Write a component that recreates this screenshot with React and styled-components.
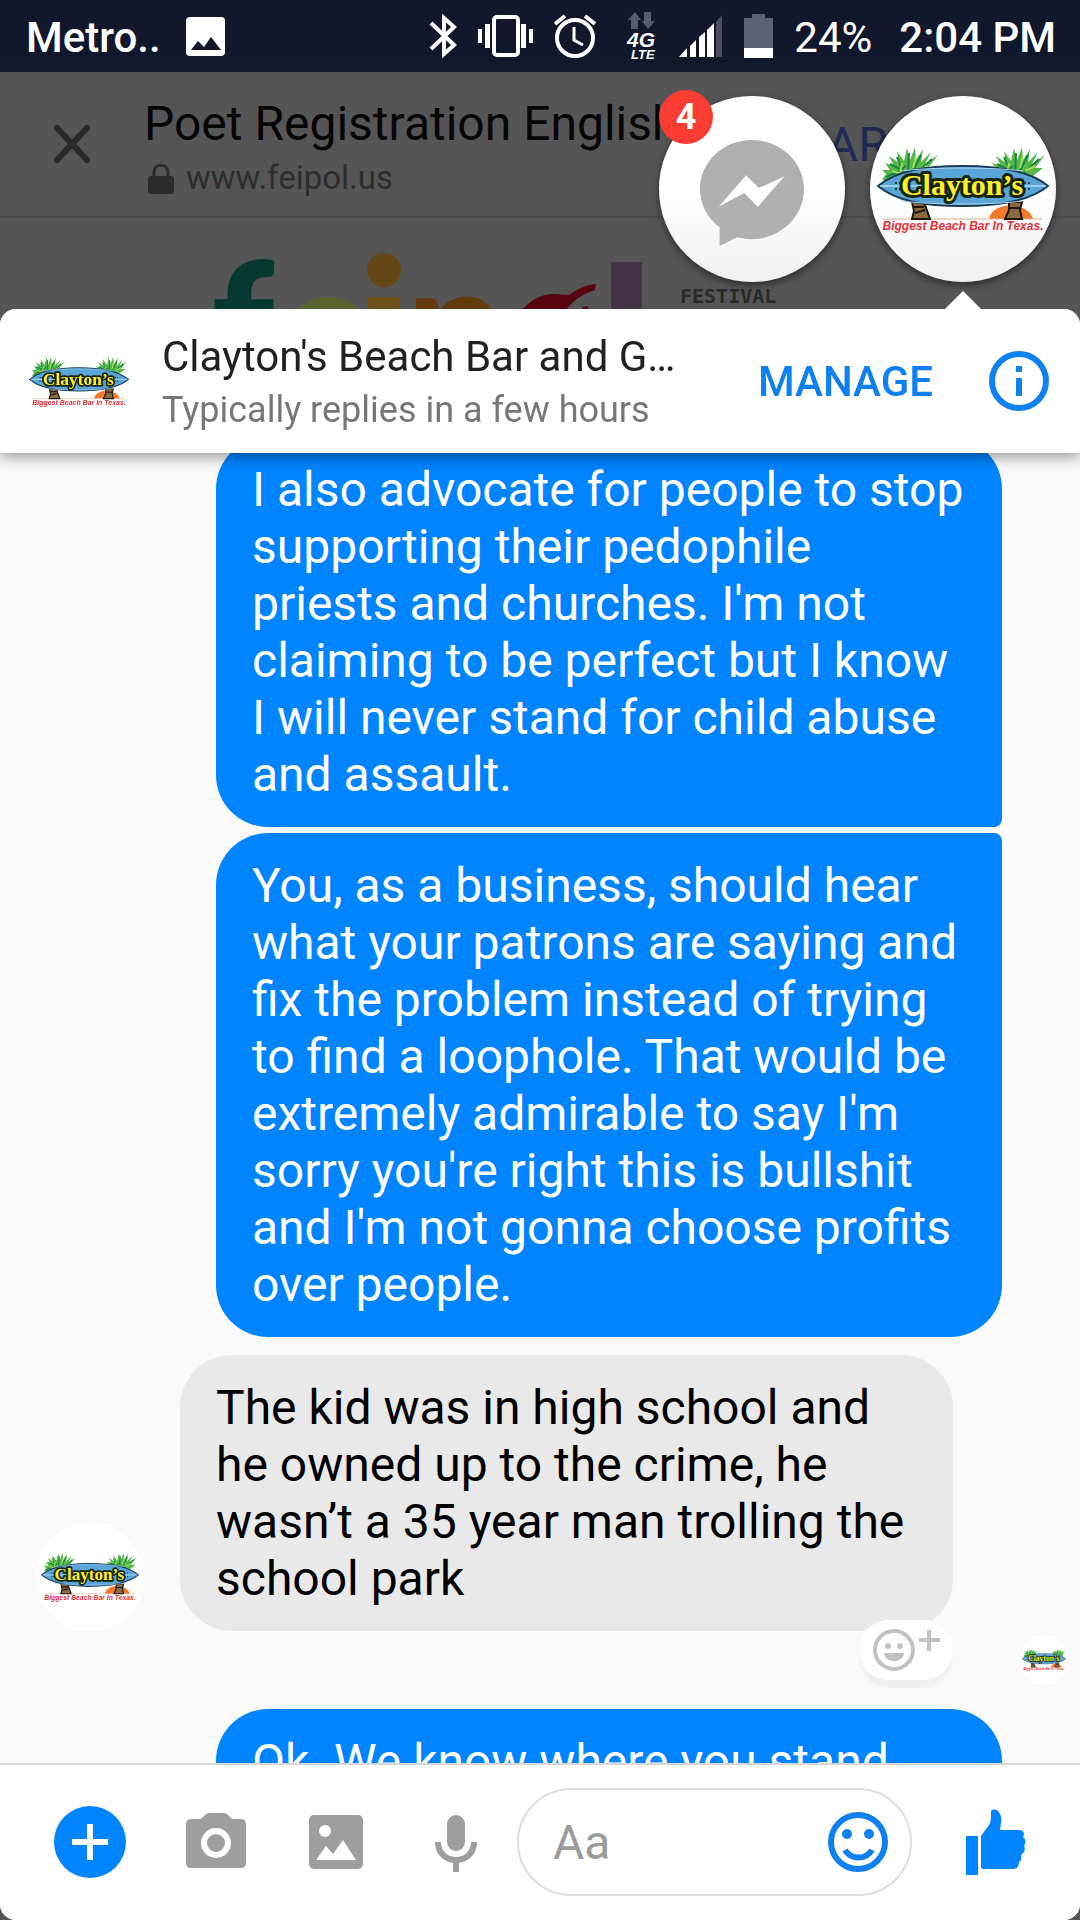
import React, { useLayoutEffect, useRef } from "react";
import styled, { createGlobalStyle, ThemeProvider } from "styled-components";

const theme = {
  colors: {
    blue: "#0084ff",
    link: "#0f80f0",
    statusBar: "#12172b",
    dimmed: "#555555",
    thread: "#fafafa",
    incoming: "#e9e9e9",
    icon: "#9e9e9e"
  },
  font: "Roboto, 'Liberation Sans', sans-serif"
};

const GlobalStyle = createGlobalStyle`
  * {
    box-sizing: border-box;
  }
  body {
    margin: 0;
    font-family: ${theme.font};
    background: ${theme.colors.dimmed};
  }
  button, input {
    font-family: inherit;
  }
  svg {
    display: block;
    flex: none;
  }
`;

const Screen = styled.div`
  position: relative;
  display: flex;
  flex-direction: column;
  height: 100vh;
  overflow: hidden;
  background: ${props => props.theme.colors.dimmed};
`;

const StatusBar = styled.header`
  display: flex;
  flex: none;
  align-items: center;
  height: 72px;
  padding: 0 24px 0 26px;
  color: #ffffff;
  font-size: 42px;
  line-height: 50px;
  background: linear-gradient(${props => props.theme.colors.statusBar} 50%, #10192b);
`;

const Carrier = styled.span`
  margin-right: 25px;
  padding-top: 4px;
  font-weight: 500;
`;

const StatusIcons = styled.div`
  display: flex;
  align-items: center;
  gap: 21px;
  margin-left: auto;
`;

const BatteryLevel = styled.span`
  padding-top: 4px;
`;

const Clock = styled.time`
  margin-left: 6px;
  padding-top: 4px;
  font-weight: 500;
`;

const Browser = styled.section`
  flex: none;
  height: 237px;
  overflow: hidden;
`;

const BrowserBar = styled.div`
  display: flex;
  align-items: center;
  padding: 18px 165px 18px 54px;
  border-bottom: 2px solid #4a4a4a;
`;

const PlainButton = styled.button`
  display: flex;
  flex: none;
  align-items: center;
  justify-content: center;
  padding: 0;
  border: 0;
  background: none;
  color: inherit;
`;

const PageInfo = styled.div`
  display: flex;
  flex-direction: column;
  gap: 6px;
  margin-left: 54px;
  padding-top: 6px;
`;

const PageTitle = styled.h1`
  margin: 0;
  color: #060606;
  font-size: 48px;
  font-weight: 400;
  line-height: 56px;
  white-space: nowrap;
`;

const PageUrl = styled.div`
  display: flex;
  align-items: center;
  gap: 12px;
  padding-left: 4px;
  color: #2d2d2d;
  font-size: 33px;
  line-height: 40px;
`;

const ShareButton = styled(PlainButton)`
  margin-left: auto;
  color: #1f2b55;
  font-size: 48px;
`;

const PageLogo = styled.div`
  display: flex;
  padding: 23px 0 0 200px;
`;

const ChatHeads = styled.nav`
  position: absolute;
  top: 96px;
  right: 24px;
  z-index: 2;
  display: flex;
  gap: 25px;
`;

const ChatHead = styled(PlainButton)`
  position: relative;
  width: 186px;
  height: 186px;
  padding-top: ${props => props.$padTop || 0}px;
  border-radius: 50%;
  background: linear-gradient(#ffffff 50%, #f0f0f0);
  box-shadow: 0 3px 8px rgba(0, 0, 0, 0.5);
`;

const Badge = styled.span`
  position: absolute;
  top: -6px;
  left: 0;
  width: 54px;
  height: 54px;
  border-radius: 50%;
  color: #ffffff;
  background: #fa3c33;
  font-size: 36px;
  font-weight: 700;
  line-height: 54px;
  text-align: center;
`;

const Pointer = styled.span`
  position: absolute;
  top: 195px;
  right: 74px;
  border: 19px solid transparent;
  border-top-width: 0;
  border-bottom-color: #ffffff;
`;

const Panel = styled.main`
  display: flex;
  flex: 1;
  flex-direction: column;
  min-height: 0;
  overflow: hidden;
  border-radius: 16px;
  background: #ffffff;
`;

const PanelHeader = styled.div`
  position: relative;
  z-index: 1;
  display: flex;
  flex: none;
  align-items: center;
  height: 144px;
  padding: 0 31px 0 28px;
  background: #ffffff;
  box-shadow: 0 4px 14px rgba(0, 0, 0, 0.4);
`;

const Contact = styled.div`
  display: flex;
  flex: 1;
  flex-direction: column;
  gap: 7px;
  min-width: 0;
  margin-left: 32px;
`;

const ContactName = styled.h2`
  margin: 0;
  overflow: hidden;
  color: #212121;
  font-size: 42px;
  font-weight: 400;
  line-height: 50px;
  text-overflow: ellipsis;
  white-space: nowrap;
`;

const ContactNote = styled.p`
  margin: 0;
  color: #777777;
  font-size: 36px;
  line-height: 42px;
`;

const ManageButton = styled(PlainButton)`
  margin-right: 56px;
  color: ${props => props.theme.colors.link};
  font-size: 42px;
  font-weight: 500;
`;

const InfoButton = styled(PlainButton)`
  color: ${props => props.theme.colors.link};
`;

const Thread = styled.div`
  flex: 1;
  min-height: 0;
  overflow-y: auto;
  scrollbar-width: none;
  background: ${props => props.theme.colors.thread};
`;

const MessageRow = styled.div`
  display: flex;
  align-items: flex-end;
  gap: 36px;
  margin-top: ${props => props.$gap || 0}px;
  padding: ${props => (props.$incoming ? "0 127px 0 36px" : "0 78px 0 20%")};
`;

const Bubble = styled.p`
  position: relative;
  flex: 1;
  margin: 0;
  padding: 24px 36px;
  border-radius: ${props => props.$corners || "52px"};
  color: ${props => (props.$incoming ? "#000000" : "#ffffff")};
  background: ${props =>
    props.$incoming ? props.theme.colors.incoming : props.theme.colors.blue};
  font-size: 48px;
  line-height: 57px;
`;

const Avatar = styled.div`
  display: flex;
  flex: none;
  align-items: center;
  justify-content: center;
  width: ${props => props.$size}px;
  height: ${props => props.$size}px;
  border-radius: 50%;
  background: #ffffff;
`;

const ReactButton = styled(PlainButton)`
  position: absolute;
  right: 0;
  bottom: -49px;
  width: 94px;
  height: 60px;
  border-radius: 30px;
  background: #ffffff;
  box-shadow: 0 8px 2px #f0f0f0;
`;

const SeenRow = styled.div`
  display: flex;
  justify-content: flex-end;
  padding: 5px 12px 25px;
`;

const Composer = styled.form`
  display: flex;
  flex: none;
  align-items: center;
  height: 157px;
  padding: 0 54px 2px;
  border-top: 2px solid #d6d6d6;
  color: ${props => props.theme.colors.icon};
  background: #ffffff;
`;

const Tools = styled.div`
  display: flex;
  align-items: center;
  gap: 60px;
`;

const PlusButton = styled(PlainButton)`
  width: 72px;
  height: 72px;
  border-radius: 50%;
  color: #ffffff;
  background: ${props => props.theme.colors.blue};
`;

const InputPill = styled.div`
  display: flex;
  flex: 1;
  align-items: center;
  min-width: 0;
  height: 108px;
  margin: 0 54px 0 31px;
  padding: 0 22px 0 34px;
  border: 2px solid #dedede;
  border-radius: 54px;
  color: ${props => props.theme.colors.link};
`;

const MessageInput = styled.input`
  flex: 1;
  width: 0;
  padding: 2px 0 0;
  border: 0;
  outline: 0;
  background: none;
  font-size: 48px;
  line-height: 56px;
  &::placeholder {
    color: #9b9b9b;
    opacity: 1;
  }
`;

const LikeButton = styled(PlainButton)`
  color: ${props => props.theme.colors.blue};
`;

const PictureIcon = () => (
  <svg width="39" height="39" viewBox="0 0 39 39">
    <rect width="39" height="39" rx="4" fill="#fff" />
    <path d="M5 33L12 24L18 30L25 20L35 33Z" fill="#12172b" />
  </svg>
);

const BluetoothIcon = () => (
  <svg width="28" height="44" viewBox="0 0 28 44" fill="none" stroke="#fff" strokeWidth="4">
    <path d="M2 9L25 31L15 40V4L25 13L2 35" />
  </svg>
);

const VibrateIcon = () => (
  <svg width="55" height="42" viewBox="0 0 55 42">
    <rect x="16" y="2" width="24" height="38" rx="3" fill="none" stroke="#fff" strokeWidth="4" />
    <path d="M0 14h4v14h-4zM7 9h5v24h-5zM43 9h5v24h-5zM51 14h4v14h-4z" fill="#fff" />
  </svg>
);

const AlarmIcon = () => (
  <svg width="42" height="44" viewBox="0 0 42 44" fill="none" stroke="#fff" strokeWidth="4">
    <circle cx="21" cy="24" r="18" />
    <path d="M20 13V26L29 31" strokeWidth="3" />
    <path d="M1 10L11 2M31 2L41 10" />
  </svg>
);

const NetworkIcon = () => (
  <svg width="41" height="48" viewBox="0 0 41 48">
    <path d="M18 0L24 8H21V17H14V8H11ZM27 0H34V9H38L31 17L25 9H27Z" fill="#565a6a" />
    <g fill="#fff" fontFamily="Liberation Sans" fontStyle="italic" fontWeight="700">
      <text x="10" y="35" fontSize="21">4G</text>
      <text x="14" y="47" fontSize="13">LTE</text>
    </g>
  </svg>
);

const SignalIcon = () => (
  <svg width="44" height="43" viewBox="0 0 44 43">
    <path d="M0 42L8 33V42ZM11 31L17 25V42H11ZM20 22L26 17V42H20ZM28 15L35 8V42H28Z" fill="#fff" />
    <path d="M37 7L43 0V42H37Z" fill="#4a4e60" />
  </svg>
);

const BatteryIcon = () => (
  <svg width="29" height="44" viewBox="0 0 29 44">
    <path d="M0 4H8V0H21V4H29V44H0Z" fill="#5d6172" />
    <path d="M0 34H29V44H0Z" fill="#fff" />
  </svg>
);

const CloseIcon = () => (
  <svg width="36" height="38" viewBox="0 0 36 38" stroke="#2a2a2e" strokeWidth="6" strokeLinecap="round">
    <path d="M3 3L33 35M33 3L3 35" />
  </svg>
);

const LockIcon = () => (
  <svg width="26" height="31" viewBox="0 0 26 31">
    <path d="M6 14V9C6 0 20 0 20 9V14" fill="none" stroke="#2b2b2b" strokeWidth="3" />
    <rect y="13" width="26" height="18" rx="3" fill="#2b2b2b" />
  </svg>
);

const FeipolLogo = () => (
  <svg width="600" height="69" viewBox="0 0 600 69" role="img" aria-label="feipol festival">
    <g fontFamily="Lato" fontWeight="900" fontSize="176">
      <text x="11" y="148" fill="#063a30">f</text>
      <text x="80" y="148" fill="#58642f">e</text>
      <text x="206" y="148" fill="#643a0d">p</text>
    </g>
    <circle cx="184" cy="29" r="17" fill="#644715" />
    <path d="M168 56H200V70H168Z" fill="#6b5018" />
    <path d="M322 69C332 57 344 53 354 53C361 53 366 54 369 54C377 48 386 44 396 43L395 49C382 53 374 59 366 69Z" fill="#58040f" />
    <path d="M382 66L388 65L388 69H384Z" fill="#58040f" />
    <path d="M411 21H442V70H411Z" fill="#443246" />
    <text x="480" y="62" fill="#2a2a2a" fontFamily="DejaVu Sans Mono" fontWeight="700" fontSize="20">
      FESTIVAL
    </text>
  </svg>
);

const MessengerIcon = () => (
  <svg width="106" height="106" viewBox="0 0 106 108">
    <path d="M53 0C82 0 106 22 106 50S82 101 53 101C48 101 42 100 38 99L20 108V89C8 80 0 66 0 50C0 22 24 0 53 0Z" fill="#b0b0b0" />
    <path d="M19 68L47 36L60 49L86 37L59 68L45 54Z" fill="#fff" />
  </svg>
);

// one palm crown, reused on both sides of the surfboard
const Palm = ({ x }) => (
  <g transform={`translate(${x} 0)`}>
    <path
      d="M0 36L4 30L0 26L8 26L3 19L12 22L7 12L17 19L15 7L22 17L25 4L28 16L33 3L34 16L41 5L39 18L49 8L43 20L56 11L46 24L54 24L44 32L8 36Z"
      fill="#54b948"
    />
    <path
      d="M4 33L20 26L8 20M22 30L15 13M26 29L27 9M30 29L39 11M34 30L50 15M12 31L24 22"
      fill="none"
      stroke="#1c8446"
      strokeWidth="2"
    />
    <path d="M18 30L20 19M31 24L34 12M36 27L46 22M10 27L20 30" stroke="#a5dc5a" strokeWidth="2" />
  </g>
);

const ClaytonsLogo = ({ width }) => (
  <svg width={width} viewBox="0 0 172 90" role="img" aria-label="Clayton's, Biggest Beach Bar In Texas">
    <Palm x={5} />
    <Palm x={112} />
    <path d="M112 75C115 57 151 57 156 75Z" fill="#f37a2b" />
    <path d="M6 75H165" stroke="#d9b48f" strokeWidth="1" />
    <path d="M35 58H47L53 75H35L37 67ZM132 58H145L143 66L145 75H128L132 66Z" fill="#8d6a3e" stroke="#1d1712" strokeWidth="2" />
    <path d="M37 63H47M38 69L48 66M131 64H144" stroke="#1d1712" strokeWidth="2" />
    <path
      d="M1 42C20 26 50 22 85 22S152 26 171 42C152 58 120 62 85 62S20 58 1 42Z"
      fill="#5aa5d8"
      stroke="#173a55"
      strokeWidth="2"
    />
    <path d="M3 42H169" stroke="#e4f3fb" strokeWidth="1" />
    <path d="M24 27C55 23 115 23 146 27M24 57C55 61 115 61 146 57" fill="none" stroke="#a9d3ec" strokeWidth="1" />
    <path d="M18 39H24M18 45H24M147 39H153M147 45H153" stroke="#1b3d57" strokeWidth="2" strokeDasharray="2 2" />
    <text
      x="85"
      y="51"
      fill="#fdf02a"
      stroke="#16240f"
      strokeWidth="6"
      strokeLinejoin="round"
      paintOrder="stroke"
      fontFamily="'Liberation Serif', serif"
      fontSize="30"
      fontWeight="700"
      textAnchor="middle"
    >
      Clayton’s
    </text>
    <text
      x="86"
      y="86"
      fill="#e0323a"
      fontFamily="Liberation Sans"
      fontSize="12"
      fontStyle="italic"
      fontWeight="700"
      textAnchor="middle"
    >
      Biggest Beach Bar In Texas.
    </text>
  </svg>
);

const InfoIcon = () => (
  <svg width="60" height="60" viewBox="0 0 60 60" fill="currentColor">
    <circle cx="30" cy="30" r="27" fill="none" stroke="currentColor" strokeWidth="6" />
    <path d="M27 15H33V21H27ZM27 27H33V45H27Z" />
  </svg>
);

const AddReactionIcon = () => (
  <svg width="67" height="44" viewBox="0 0 67 44" fill="none" stroke="#c2c2c2" strokeWidth="4">
    <circle cx="21" cy="22" r="19" />
    <path d="M56 2V23M46 12H67" strokeWidth="4" />
    <g fill="#c2c2c2" stroke="none">
      <circle cx="15" cy="18" r="3" />
      <circle cx="27" cy="18" r="3" />
      <path d="M11 25H31C30 36 12 36 11 25Z" />
    </g>
  </svg>
);

const PlusIcon = () => (
  <svg width="36" height="36" viewBox="0 0 36 36" fill="currentColor">
    <path d="M15 0H21V15H36V21H21V36H15V21H0V15H15Z" />
  </svg>
);

const CameraIcon = () => (
  <svg width="60" height="60" viewBox="0 0 60 60" fill="currentColor">
    <path d="M19 3C21 1 23 1 25 1H36C38 1 40 1 42 3L46 7H55C58 7 60 9 60 12V51C60 54 58 56 55 56H5C2 56 0 54 0 51V12C0 9 2 7 5 7H15Z" />
    <circle cx="30" cy="31" r="12" fill="none" stroke="#fff" strokeWidth="6" />
  </svg>
);

const GalleryIcon = () => (
  <svg width="60" height="60" viewBox="0 0 60 60" fill="currentColor">
    <rect x="3" y="3" width="54" height="54" rx="5" />
    <circle cx="19" cy="19" r="6" fill="#fff" />
    <path d="M10 48L20 34L27 42L37 28L50 48Z" fill="#fff" />
  </svg>
);

const MicIcon = () => (
  <svg width="60" height="60" viewBox="0 0 60 60" fill="currentColor">
    <rect x="21" y="3" width="18" height="36" rx="9" />
    <path d="M12 30C12 54 48 54 48 30M30 48V60" fill="none" stroke="currentColor" strokeWidth="6" />
  </svg>
);

const SmileIcon = () => (
  <svg width="60" height="60" viewBox="0 0 60 60" fill="currentColor">
    <circle cx="30" cy="30" r="27" fill="none" stroke="currentColor" strokeWidth="6" />
    <circle cx="19" cy="22" r="5" />
    <circle cx="41" cy="22" r="5" />
    <path d="M17 38C23 48 38 48 44 38" fill="none" stroke="currentColor" strokeWidth="6" />
  </svg>
);

const ThumbIcon = () => (
  <svg width="60" height="66" viewBox="0 0 60 66" fill="currentColor">
    <path d="M0 27H12V66H0Z" />
    <path d="M15 27L23 16C25 13 25 9 25 2C26 0 30 0 32 2C35 5 36 10 35 14L34 21H53C58 21 59 25 57 28C60 30 60 34 58 37C60 40 58 44 55 46C56 50 55 52 53 53C53 57 51 60 47 60H17C16 60 15 59 15 58Z" />
  </svg>
);

const outgoing = [
  {
    corners: "52px 52px 8px 52px",
    text:
      "I also advocate for people to stop supporting their pedophile priests and churches. I'm not claiming to be perfect but I know I will never stand for child abuse and assault."
  },
  {
    corners: "52px 8px 52px 52px",
    text:
      "You, as a business, should hear what your patrons are saying and fix the problem instead of trying to find a loophole. That would be extremely admirable to say I'm sorry you're right this is bullshit and I'm not gonna choose profits over people."
  }
];

const Conversation = () => {
  const thread = useRef(null);

  // the thread opens slightly scrolled, under the header
  useLayoutEffect(() => {
    thread.current.scrollTop = 16;
  }, []);

  return (
    <Thread ref={thread}>
      {outgoing.map((message, index) => (
        <MessageRow key={message.text} $gap={index ? 6 : 0}>
          <Bubble $corners={message.corners}>{message.text}</Bubble>
        </MessageRow>
      ))}
      <MessageRow $incoming $gap={18}>
        <Avatar $size={108}>
          <ClaytonsLogo width={98} />
        </Avatar>
        <Bubble $incoming as="div">
          The kid was in high school and he owned up to the crime, he wasn’t a 35 year man trolling
          the school park
          <ReactButton type="button" aria-label="Add reaction">
            <AddReactionIcon />
          </ReactButton>
        </Bubble>
      </MessageRow>
      <SeenRow>
        <Avatar $size={48}>
          <ClaytonsLogo width={44} />
        </Avatar>
      </SeenRow>
      <MessageRow>
        <Bubble>Ok. We know where you stand</Bubble>
      </MessageRow>
    </Thread>
  );
};

const App = () => (
  <ThemeProvider theme={theme}>
    <GlobalStyle />
    <Screen>
      <StatusBar>
        <Carrier>Metro..</Carrier>
        <PictureIcon />
        <StatusIcons>
          <BluetoothIcon />
          <VibrateIcon />
          <AlarmIcon />
          <NetworkIcon />
          <SignalIcon />
          <BatteryIcon />
          <BatteryLevel>24%</BatteryLevel>
          <Clock>2:04 PM</Clock>
        </StatusIcons>
      </StatusBar>
      <Browser>
        <BrowserBar>
          <PlainButton type="button" aria-label="Close">
            <CloseIcon />
          </PlainButton>
          <PageInfo>
            <PageTitle>Poet Registration English</PageTitle>
            <PageUrl>
              <LockIcon />
              www.feipol.us
            </PageUrl>
          </PageInfo>
          <ShareButton type="button">SHARE</ShareButton>
        </BrowserBar>
        <PageLogo>
          <FeipolLogo />
        </PageLogo>
      </Browser>
      <ChatHeads>
        <ChatHead type="button" aria-label="Messenger, 4 unread" $padTop={8}>
          <MessengerIcon />
          <Badge>4</Badge>
        </ChatHead>
        <ChatHead type="button" aria-label="Clayton's">
          <ClaytonsLogo width={172} />
          <Pointer />
        </ChatHead>
      </ChatHeads>
      <Panel>
        <PanelHeader>
          <Avatar $size={102}>
            <ClaytonsLogo width={100} />
          </Avatar>
          <Contact>
            <ContactName>Clayton's Beach Bar and G…</ContactName>
            <ContactNote>Typically replies in a few hours</ContactNote>
          </Contact>
          <ManageButton type="button">MANAGE</ManageButton>
          <InfoButton type="button" aria-label="Information">
            <InfoIcon />
          </InfoButton>
        </PanelHeader>
        <Conversation />
        <Composer onSubmit={event => event.preventDefault()}>
          <Tools>
            <PlusButton type="button" aria-label="More">
              <PlusIcon />
            </PlusButton>
            <PlainButton type="button" aria-label="Camera">
              <CameraIcon />
            </PlainButton>
            <PlainButton type="button" aria-label="Gallery">
              <GalleryIcon />
            </PlainButton>
            <PlainButton type="button" aria-label="Voice message">
              <MicIcon />
            </PlainButton>
          </Tools>
          <InputPill>
            <MessageInput type="text" placeholder="Aa" aria-label="Message" />
            <PlainButton type="button" aria-label="Emoji">
              <SmileIcon />
            </PlainButton>
          </InputPill>
          <LikeButton type="button" aria-label="Like">
            <ThumbIcon />
          </LikeButton>
        </Composer>
      </Panel>
    </Screen>
  </ThemeProvider>
);

export default App;
